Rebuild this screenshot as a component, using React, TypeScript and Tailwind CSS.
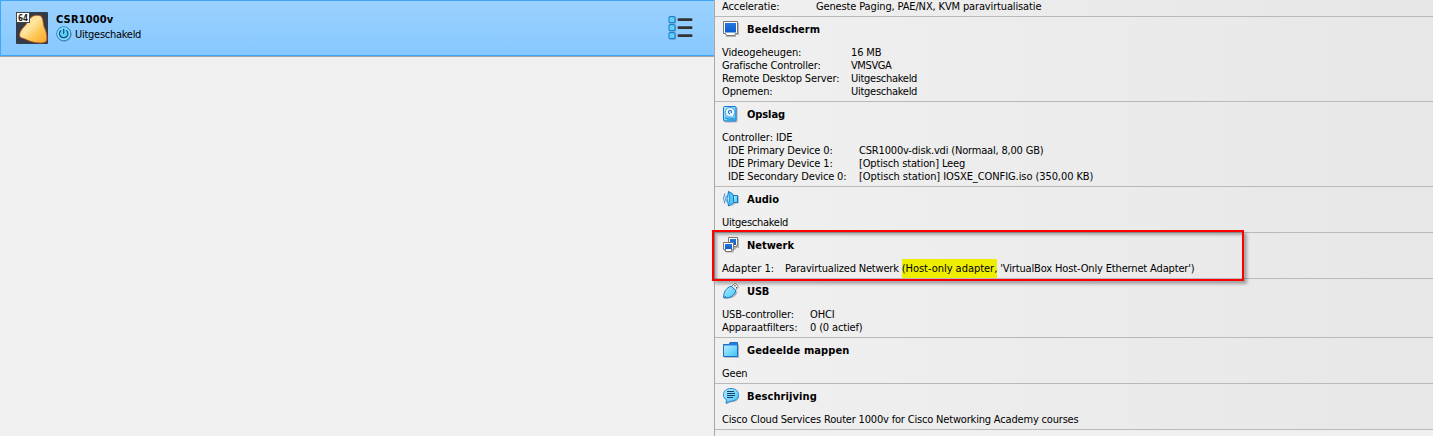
import React from "react";

type Row = { label: string; value?: React.ReactNode; track?: string; labelTrack?: string; indent?: boolean };

function Section({ icon, title, titleTrack, col, rows }: { icon: React.ReactNode; title: string; titleTrack?: string; col?: string; rows: Row[] }) {
  return (
    <section className="border-t border-[#b9b9b9] bg-linear-to-r from-[#f0f0f0] to-[#e7e7e7] pb-[3px] pl-2">
      <header className="flex h-[29px] items-start pt-1">
        <span className="h-4 w-4 shrink-0">{icon}</span>
        <h2 className={`mt-px ml-2 text-[11px] leading-4 font-bold ${titleTrack ?? "tracking-[0.1px]"}`}>{title}</h2>
      </header>
      {rows.map((r) => (
        <div key={r.label} className="-ml-px flex h-[13px] leading-[13px] whitespace-pre">
          <span className={`shrink-0 ${col ?? ""} ${r.labelTrack ?? "tracking-[-0.16px]"} ${r.indent ? "pl-1.5" : ""}`}>{r.label}</span>
          <span className={r.track ?? "tracking-[-0.15px]"}>{r.value}</span>
        </div>
      ))}
    </section>
  );
}

const Svg = ({ children }: { children: React.ReactNode }) => (
  <svg width="17" height="17" viewBox="0 0 17 17" className="block overflow-visible">
    <defs>
      <linearGradient id="sky" x1="0" y1="0" x2="1" y2="1"><stop offset="0" stopColor="#b5ecff" /><stop offset="1" stopColor="#42c5fb" /></linearGradient>
      <linearGradient id="blue" x1="0" y1="0" x2="0" y2="1"><stop offset="0" stopColor="#2478dc" /><stop offset="1" stopColor="#0b5ccc" /></linearGradient>
    </defs>
    {children}
  </svg>
);

const Display = () => (
  <Svg>
    <path d="M2 2H16V14H13V16H3V14H2Z" fill="#b4b4b4" />
    <path d="M.5.5H14.5V12.5H12.5L11.5 14.5H3.5L2.5 12.5H.5Z" fill="#fff" stroke="#777" />
    <rect x="2" y="2" width="11" height="9.5" fill="url(#blue)" />
  </Svg>
);
const Disk = () => (
  <Svg>
    <rect x="1.5" y="1.5" width="13" height="15" rx="1" fill="#a9b6c2" />
    <rect x=".5" y=".5" width="12.5" height="14.5" rx="1" fill="url(#sky)" stroke="#1976d2" />
    <circle cx="7" cy="6.3" r="4.8" fill="#e8f8ff" stroke="#4a9ee0" />
    <circle cx="7" cy="6" r="1.7" fill="#b9e6fb" stroke="#176fc8" />
    <path d="M7.5 7L9.5 10.5" stroke="#fff" strokeWidth="1.5" />
    <path d="M2 11.5L5 13H11.5" fill="none" stroke="#176fc8" />
  </Svg>
);
const Speaker = () => (
  <Svg>
    <path d="M8.5 1V15.5L13 12.5H16V5H12Z" fill="#b4bcc2" />
    <path d="M10.5 4.5H14.5V11.5H10.5Z" fill="url(#sky)" stroke="#1874c9" />
    <path d="M5.5.5Q8.5 1.5 10.5 4.5V11.5Q8.5 14 5.5 15Z" fill="#51c9fa" stroke="#1874c9" />
    <path d="M5.5.5Q2.5 8 5.5 15Q8 8 5.5.5Z" fill="#9fe4ff" stroke="#1874c9" strokeWidth=".8" />
    <path d="M1.8 2.5Q-.8 7.5 1.8 12.5M3.3 4.5Q2 8 3.3 11" fill="none" stroke="#2d83c7" strokeWidth=".9" />
  </Svg>
);
const Network = () => (
  <Svg>
    <path d="M6 2H16V11H13V12.5H11V15.5H3V14H1V7H6Z" fill="#b4b4b4" />
    <path d="M5.5.5H14.5V8.5H13.5V9.5H6.5V8.5H5.5Z" fill="#fff" stroke="#777" />
    <rect x="7" y="2" width="6" height="6" fill="url(#blue)" />
    <path d="M.5 5.5H10.5V12.5H8.5V14.5H2.5V12.5H.5Z" fill="#fff" stroke="#777" />
    <rect x="2" y="7" width="7" height="5" fill="url(#blue)" />
  </Svg>
);
const Usb = () => (
  <Svg>
    <path d="M2 15.5Q12 17 14.5 9L12 7Z" fill="#b3b9bf" />
    <path d="M8.7 3.3L11.4.8Q12.2.2 13 .9L15 3Q15.7 3.8 15 4.5L12.5 7.2Z" fill="#fff" stroke="#858a8e" />
    <path d="M11.3 2.8H12.5M12.9 4.6H14.1" stroke="#444" strokeWidth="1.2" />
    <path d="M.7 14.8C.2 9.5 3.5 4.3 8.3 3.2L12.7 7.6C12.3 12 7 15.8.7 14.8Z" fill="url(#sky)" stroke="#1874c9" />
    <path d="M1 15L3 13" stroke="#1874c9" />
  </Svg>
);
const Folder = () => (
  <Svg>
    <path d="M1.5 2.5H16V15.8H1.5Z" fill="#a9b2ba" />
    <path d="M.5 2.5H6L7 .5H14.5V14.5H.5Z" fill="#267fd6" stroke="#176fc8" />
    <path d="M1 3.5H14V14H1Z" fill="url(#sky)" />
  </Svg>
);
const Bubble = () => (
  <Svg>
    <path d="M2 13L4 16L7 14.5Q16 14 16.3 8Z" fill="#a9b2ba" />
    <path d="M8 .5C12.5.5 15.5 3 15.5 6.7S12.5 13 8 13L3 15.3L4 12.3C1.5 11 .5 9 .5 6.7C.5 3 3.5.5 8 .5Z" fill="url(#sky)" stroke="#2d86d4" />
    <path d="M4 3.5H11M4 5.5H12M4 7.5H12M4 9.5H10" stroke="#173f70" />
  </Svg>
);

function MachineIcon() {
  return (
    <svg width="32" height="32" viewBox="0 0 32 32" className="block shrink-0">
      <defs>
        <linearGradient id="gold" x1="0" y1="0" x2="1" y2="1"><stop offset=".1" stopColor="#ffd58a" /><stop offset=".4" stopColor="#ffe6a0" /><stop offset=".65" stopColor="#ffc653" /><stop offset="1" stopColor="#f8a52c" /></linearGradient>
      </defs>
      <rect width="32" height="32" rx="1" fill="#353c49" />
      <path d="M14 6.5C16.5 3.5 21 2.6 24.5 4C27.5 5.5 26.8 12 28.5 16C30.5 20 31.5 26 30.5 29C28 31.8 22 31 17 30C12 29 9 26.5 6 26C3.3 25.5 3.2 22.5 4.5 19.5C6 16 9.5 14 11 11Z" fill="url(#gold)" stroke="#b5551c" strokeWidth=".8" />
      <path d="M0 0H14V11H0Z" fill="#444" />
      <path d="M1 1H13V10H1Z" fill="#fff" />
      <text x="2" y="8.6" fontFamily="DejaVu Sans" fontSize="8" fontWeight="bold" textLength="10" lengthAdjust="spacingAndGlyphs" fill="#222">64</text>
    </svg>
  );
}

function PowerIcon() {
  return (
    <svg width="16" height="16" viewBox="0 0 16 16" className="block shrink-0">
      <circle cx="8.3" cy="8.3" r="7.5" fill="#6e9cc4" />
      <circle cx="7.7" cy="7.7" r="7" fill="#5fcffa" stroke="#2b86d0" />
      <circle cx="7.7" cy="7.7" r="5.8" fill="none" stroke="#a8e8ff" strokeWidth=".8" />
      <path d="M7.7 2.8V8M5 4.4A4.2 4.2 0 1 0 10.4 4.4" fill="none" stroke="#16406f" strokeWidth="1.1" />
    </svg>
  );
}

function ListIcon() {
  return (
    <svg width="26" height="24" viewBox="0 0 26 24" className="block">
      {[0, 8, 16].map((y) => (
        <g key={y}>
          <rect x="1.5" y={y + 1} width="6.5" height="6.5" rx="1" fill="#6f9cbd" />
          <rect x="1" y={y + 0.6} width="6" height="6" rx="1" fill="#62d0fb" stroke="#2380cc" strokeWidth="1.1" />
          <rect x="9.5" y={y + 2.2} width="15" height="2.8" rx="1.2" fill="#333" />
        </g>
      ))}
    </svg>
  );
}

export default function App() {
  return (
    <div className="relative flex h-[436px] w-[1433px] overflow-hidden bg-[#f0f0f0] font-['DejaVu_Sans_Condensed','DejaVu_Sans',sans-serif] text-[11px] text-black [font-stretch:condensed]">
      <aside className="w-[714px] shrink-0">
        <div className="flex h-14 items-start border border-r-0 border-[#3ea6fb] bg-linear-to-b from-[#9bd1ff] to-[#86c8ff] pt-[11px] pl-[15px] shadow-[0_1px_0_#a5a5a5]">
          <MachineIcon />
          <div className="ml-2">
            <div className="mt-px h-[13px] text-[11px] leading-[14px] font-bold tracking-[0.15px]">CSR1000v</div>
            <div className="flex h-4 items-center">
              <PowerIcon />
              <span className="mt-px ml-[3px] leading-4 tracking-[-0.27px]">Uitgeschakeld</span>
            </div>
          </div>
          <div className="mt-[4px] mr-[20px] ml-auto"><ListIcon /></div>
        </div>
      </aside>
      <main className="min-w-0 flex-1 border-l border-[#a9a9a9]">
        <div className="flex h-4 bg-linear-to-r from-[#f0f0f0] to-[#e6e6e6] pl-[7px] leading-[13px]">
          <span className="w-[94px] tracking-[-0.1px]">Acceleratie:</span>
          <span className="tracking-[-0.14px]">Geneste Paging, PAE/NX, KVM paravirtualisatie</span>
        </div>
        <Section icon={<Display />} title="Beeldscherm" col="w-[129px]" rows={[
          { label: "Videogeheugen:", labelTrack: "tracking-[-0.1px]", value: "16 MB" },
          { label: "Grafische Controller:", value: "VMSVGA", track: "tracking-[-0.4px]" },
          { label: "Remote Desktop Server:", value: "Uitgeschakeld", track: "tracking-[-0.27px]" },
          { label: "Opnemen:", value: "Uitgeschakeld", track: "tracking-[-0.27px]" },
        ]} />
        <Section icon={<Disk />} title="Opslag" titleTrack="tracking-[-0.1px]" col="w-[137px]" rows={[
          { label: "Controller: IDE", labelTrack: "tracking-[-0.08px]" },
          { label: "IDE Primary Device 0:", indent: true, value: "CSR1000v-disk.vdi (Normaal, 8,00 GB)", track: "tracking-[-0.18px]" },
          { label: "IDE Primary Device 1:", indent: true, value: "[Optisch station] Leeg" },
          { label: "IDE Secondary Device 0:", indent: true, value: "[Optisch station] IOSXE_CONFIG.iso (350,00 KB)", track: "tracking-[-0.08px]" },
        ]} />
        <Section icon={<Speaker />} title="Audio" titleTrack="tracking-normal" rows={[{ label: "Uitgeschakeld", labelTrack: "tracking-[-0.27px]" }]} />
        <Section icon={<Network />} title="Netwerk" titleTrack="tracking-normal" col="w-[63px]" rows={[
          { label: "Adapter 1:", labelTrack: "tracking-normal", value: <><span className="tracking-[-0.19px]">Paravirtualized Netwerk </span><mark className="bg-[#eeee00] py-[3px] tracking-[-0.03px] text-black">(Host-only adapter,</mark><span className="tracking-[-0.15px]"> 'VirtualBox Host-Only Ethernet Adapter')</span></> },
        ]} />
        <Section icon={<Usb />} title="USB" titleTrack="tracking-[-0.15px]" col="w-[88px]" rows={[
          { label: "USB-controller:", value: "OHCI" },
          { label: "Apparaatfilters:", labelTrack: "tracking-[-0.1px]", value: "0 (0 actief)" },
        ]} />
        <Section icon={<Folder />} title="Gedeelde mappen" rows={[{ label: "Geen" }]} />
        <Section icon={<Bubble />} title="Beschrijving" rows={[{ label: "Cisco Cloud Services Router 1000v for Cisco Networking Academy courses", labelTrack: "tracking-[-0.18px]" }]} />
        <div className="border-t border-[#b9b9b9]" />
      </main>
      <div className="pointer-events-none absolute top-[230px] left-[712px] h-[51px] w-[532px] border-2 border-[#fe0000] shadow-[3px_3px_3px_rgba(0,0,0,0.3),inset_3px_3px_3px_rgba(0,0,0,0.28)]" />
    </div>
  );
}
